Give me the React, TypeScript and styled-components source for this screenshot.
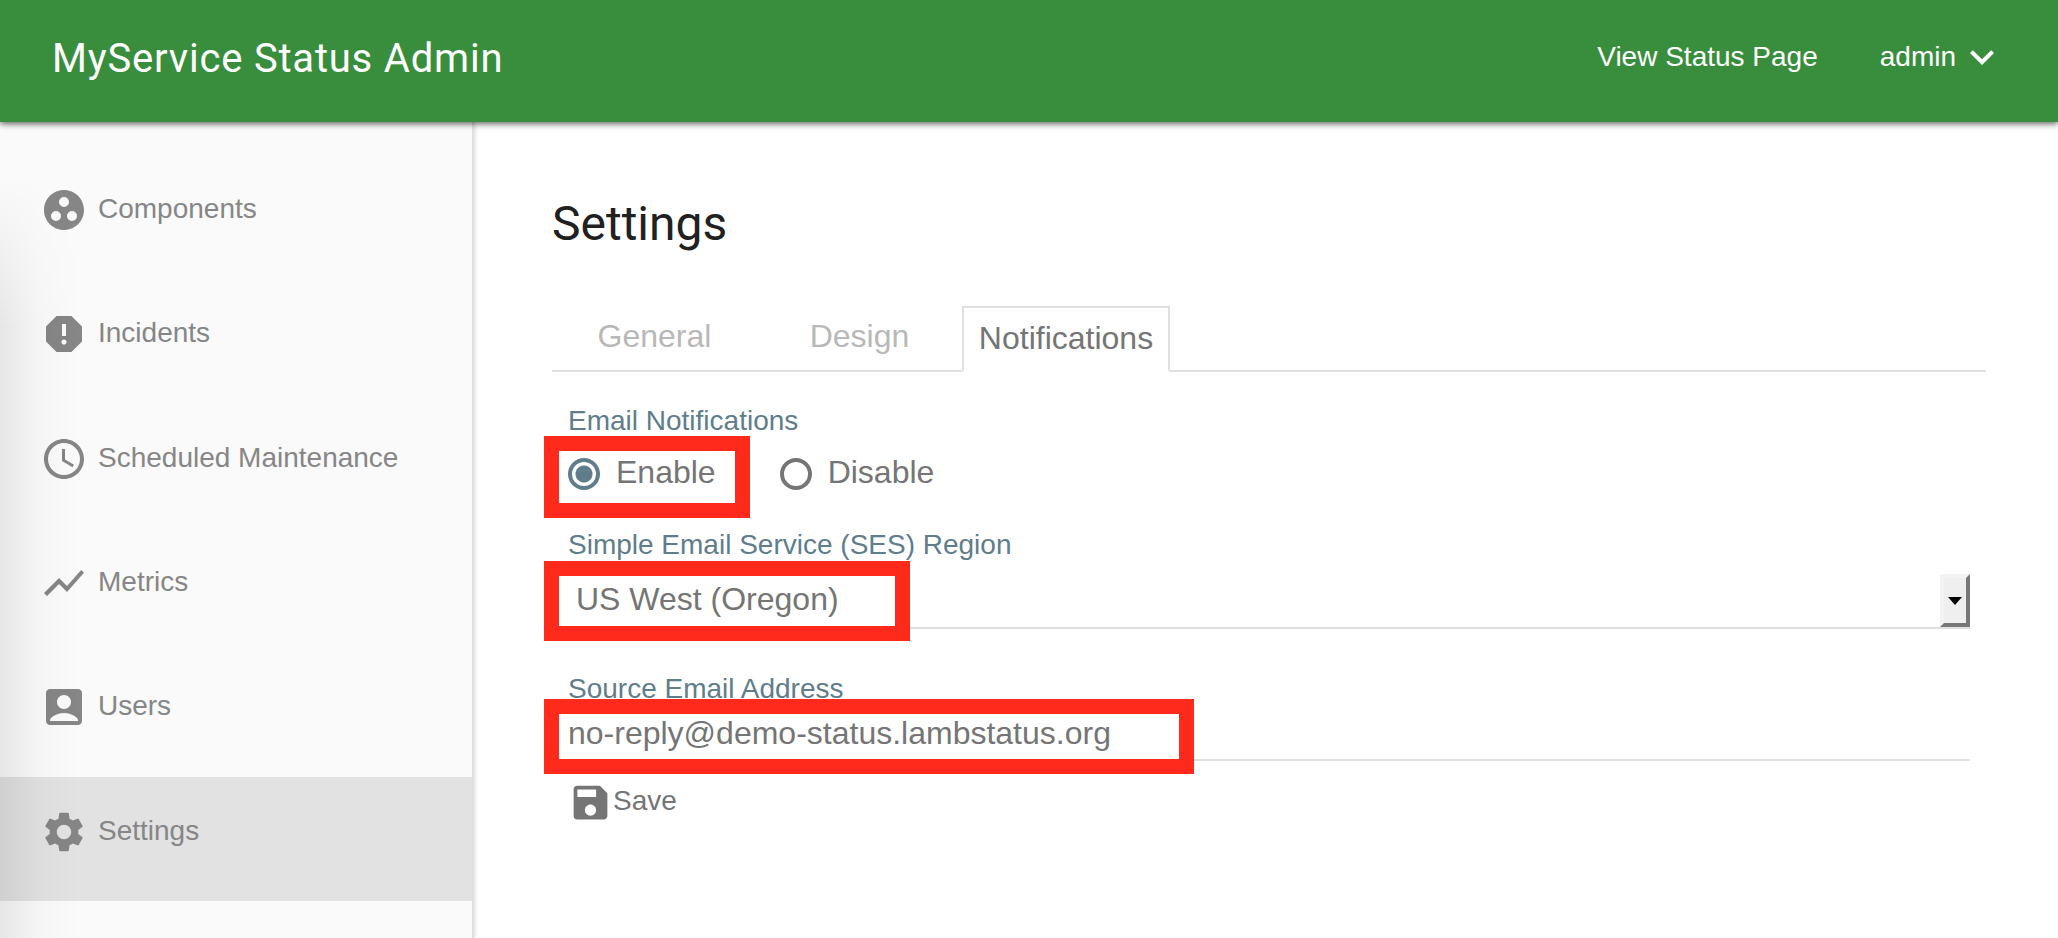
import React, { useState } from 'react';
import styled, { createGlobalStyle } from 'styled-components';
import type { IconType } from 'react-icons';
import {
  MdAccessTime,
  MdAccountBox,
  MdExpandMore,
  MdGroupWork,
  MdReport,
  MdSave,
  MdSettings,
  MdShowChart,
} from 'react-icons/md';

const sans = '"Liberation Sans", Arial, sans-serif';
const display = 'Roboto, "Liberation Sans", sans-serif';

const GlobalStyle = createGlobalStyle`
  *, *::before, *::after { box-sizing: border-box; }
  html, body, #root { min-height: 100vh; }
  body {
    margin: 0;
    background: #fff;
    color: #757575;
    font-family: ${sans};
    font-size: 28px;
    line-height: 32px;
  }
  button, input, select { font: inherit; color: inherit; }
`;

const Page = styled.div`
  display: flex;
  flex-direction: column;
  min-height: 100vh;
`;

const Header = styled.header`
  position: relative;
  z-index: 2;
  display: flex;
  align-items: center;
  justify-content: space-between;
  height: 122px;
  padding: 0 52px 8px;
  background: #388e3c;
  box-shadow: 0 2px 6px rgba(0, 0, 0, 0.6);
  color: #fff;
`;

const Brand = styled.span`
  padding-top: 4px;
  font-family: ${display};
  font-size: 40px;
  font-weight: 400;
  line-height: 48px;
  letter-spacing: 0.02em;
`;

const HeaderNav = styled.nav`
  display: flex;
  align-items: center;
  gap: 62px;
`;

const HeaderLink = styled.a`
  color: inherit;
  text-decoration: none;
`;

const AccountButton = styled.button`
  display: flex;
  align-items: center;
  gap: 2px;
  padding: 0;
  border: 0;
  background: none;
`;

const Body = styled.div`
  display: flex;
  flex: 1;
`;

const Sidebar = styled.aside`
  position: relative;
  flex: 0 0 474px;
  padding-top: 33px;
  border-right: 2px solid #e0e0e0;
  background: #fafafa;
  box-shadow: 1px 0 4px rgba(0, 0, 0, 0.15);

  &::after {
    content: '';
    position: absolute;
    inset: 56px auto 0 0;
    width: 80px;
    background: linear-gradient(to right, rgba(0, 0, 0, 0.08), rgba(0, 0, 0, 0.02) 50%, transparent);
    mask-image: linear-gradient(to bottom, transparent, #000 150px);
    pointer-events: none;
  }
`;

const SideNav = styled.nav`
  display: grid;
  grid-template-rows: repeat(6, 1fr);
  height: 746px;
`;

const SideLink = styled.a<{ $active?: boolean }>`
  display: flex;
  gap: 10px;
  padding: 31px 40px 0;
  background: ${({ $active }) => ($active ? '#e2e2e2' : 'transparent')};
  color: #868686;
  line-height: 46px;
  text-decoration: none;
`;

const Main = styled.main`
  flex: 1;
  min-width: 0;
  padding: 74px 72px 72px 78px;
`;

const Title = styled.h1`
  margin: 0;
  color: #212121;
  font-family: ${display};
  font-size: 48px;
  font-weight: 400;
  line-height: 56px;
`;

const Tabs = styled.div`
  display: flex;
  align-items: flex-end;
  margin-top: 54px;
  border-bottom: 2px solid #e0e0e0;
`;

const Tab = styled.button<{ $active: boolean }>`
  width: ${({ $active }) => ($active ? 208 : 205)}px;
  height: 66px;
  margin-bottom: -2px;
  padding: 0 0 ${({ $active }) => ($active ? 2 : 6)}px;
  border: 2px solid ${({ $active }) => ($active ? '#e0e0e0' : 'transparent')};
  border-bottom-color: ${({ $active }) => ($active ? '#fff' : 'transparent')};
  background: ${({ $active }) => ($active ? '#fff' : 'none')};
  color: ${({ $active }) => ($active ? '#757575' : '#b8b8b8')};
  font-size: 32px;
`;

const Form = styled.form`
  display: flex;
  flex-direction: column;
  margin: 33px 16px 0;
`;

const FieldSet = styled.fieldset`
  min-width: 0;
  margin: 0;
  padding: 0;
  border: 0;
`;

const Legend = styled.legend`
  padding: 0;
  color: #607d8b;
`;

const Label = styled.label`
  color: #607d8b;
`;

const RadioRow = styled.div`
  display: flex;
  gap: 64px;
  margin-top: 17px;
`;

const RadioLabel = styled.label`
  position: relative;
  display: flex;
  align-items: flex-start;
  gap: 16px;
  font-size: 32px;
  line-height: 36px;
`;

const Radio = styled.input`
  appearance: none;
  width: 32px;
  height: 32px;
  margin: 4px 0 0;
  border: 4px solid #757575;
  border-radius: 50%;

  &:checked {
    border-color: #607d8b;
    background: radial-gradient(circle, #607d8b 8px, transparent 9px);
  }
`;

const Field = styled.div<{ $space: number }>`
  position: relative;
  display: flex;
  flex-direction: column;
  margin-top: ${({ $space }) => $space}px;
`;

const SelectWrap = styled.div`
  position: relative;
  display: flex;
  margin-top: 13px;
  border-bottom: 2px solid #e0e0e0;
`;

const Select = styled.select`
  appearance: none;
  flex: 1;
  height: 53px;
  padding: 0 40px 4px 8px;
  border: 0;
  border-radius: 0;
  background: none;
  font-size: 32px;
  line-height: 40px;
`;

const SelectArrow = styled.span`
  position: absolute;
  inset: 0 0 0 auto;
  display: flex;
  align-items: center;
  justify-content: center;
  width: 30px;
  border: 4px solid;
  border-color: #f3f3f3 #777 #777 #f3f3f3;
  background: #efefef;
  pointer-events: none;
`;

const TextInput = styled.input`
  height: 56px;
  padding: 2px 0 0;
  border: 0;
  border-bottom: 2px solid #e0e0e0;
  border-radius: 0;
  background: none;
  font-size: 32px;
`;

const SaveButton = styled.button`
  display: flex;
  align-items: center;
  align-self: flex-start;
  margin-top: 19px;
  padding: 0;
  border: 0;
  background: none;
`;

const SaveText = styled.span`
  padding-bottom: 3px;
`;

/* Red frame that points out a value to fill in. */
const Highlight = styled.span<{ $top: number; $width: number; $height: number }>`
  position: absolute;
  top: ${({ $top }) => $top}px;
  left: -24px;
  width: ${({ $width }) => $width}px;
  height: ${({ $height }) => $height}px;
  border: 15px solid #ff2a1c;
  pointer-events: none;
`;

const sections: { name: string; Icon: IconType }[] = [
  { name: 'Components', Icon: MdGroupWork },
  { name: 'Incidents', Icon: MdReport },
  { name: 'Scheduled Maintenance', Icon: MdAccessTime },
  { name: 'Metrics', Icon: MdShowChart },
  { name: 'Users', Icon: MdAccountBox },
  { name: 'Settings', Icon: MdSettings },
];

const tabs = ['General', 'Design', 'Notifications'];

export default function App() {
  const [tab, setTab] = useState('Notifications');
  const [enabled, setEnabled] = useState(true);
  const [email, setEmail] = useState('no-reply@demo-status.lambstatus.org');

  return (
    <Page>
      <GlobalStyle />
      <Header>
        <Brand>MyService Status Admin</Brand>
        <HeaderNav>
          <HeaderLink href="#status">View Status Page</HeaderLink>
          <AccountButton type="button">
            admin
            <MdExpandMore size={48} />
          </AccountButton>
        </HeaderNav>
      </Header>
      <Body>
        <Sidebar>
          <SideNav>
            {sections.map(({ name, Icon }) => (
              <SideLink key={name} href={`#${name}`} $active={name === 'Settings'}>
                <Icon size={48} />
                {name}
              </SideLink>
            ))}
          </SideNav>
        </Sidebar>
        <Main>
          <Title>Settings</Title>
          <Tabs role="tablist">
            {tabs.map((name) => (
              <Tab
                key={name}
                type="button"
                role="tab"
                aria-selected={tab === name}
                $active={tab === name}
                onClick={() => setTab(name)}
              >
                {name}
              </Tab>
            ))}
          </Tabs>
          <Form onSubmit={(e) => e.preventDefault()}>
            <FieldSet>
              <Legend>Email Notifications</Legend>
              <RadioRow>
                <RadioLabel>
                  <Radio type="radio" name="email" checked={enabled} onChange={() => setEnabled(true)} />
                  Enable
                  <Highlight $top={-18} $width={206} $height={82} />
                </RadioLabel>
                <RadioLabel>
                  <Radio type="radio" name="email" checked={!enabled} onChange={() => setEnabled(false)} />
                  Disable
                </RadioLabel>
              </RadioRow>
            </FieldSet>
            <Field $space={39}>
              <Label htmlFor="region">Simple Email Service (SES) Region</Label>
              <SelectWrap>
                <Select id="region" defaultValue="us-west-2">
                  <option value="us-west-2">US West (Oregon)</option>
                </Select>
                <SelectArrow>
                  <svg width="14" height="8" viewBox="0 0 14 8" aria-hidden="true">
                    <path d="M0 0h14L7 8z" fill="#000" />
                  </svg>
                </SelectArrow>
              </SelectWrap>
              <Highlight $top={32} $width={366} $height={80} />
            </Field>
            <Field $space={44}>
              <Label htmlFor="source">Source Email Address</Label>
              <TextInput id="source" type="email" value={email} onChange={(e) => setEmail(e.target.value)} />
              <Highlight $top={26} $width={650} $height={75} />
            </Field>
            <SaveButton type="submit">
              <MdSave size={45} />
              <SaveText>Save</SaveText>
            </SaveButton>
          </Form>
        </Main>
      </Body>
    </Page>
  );
}
